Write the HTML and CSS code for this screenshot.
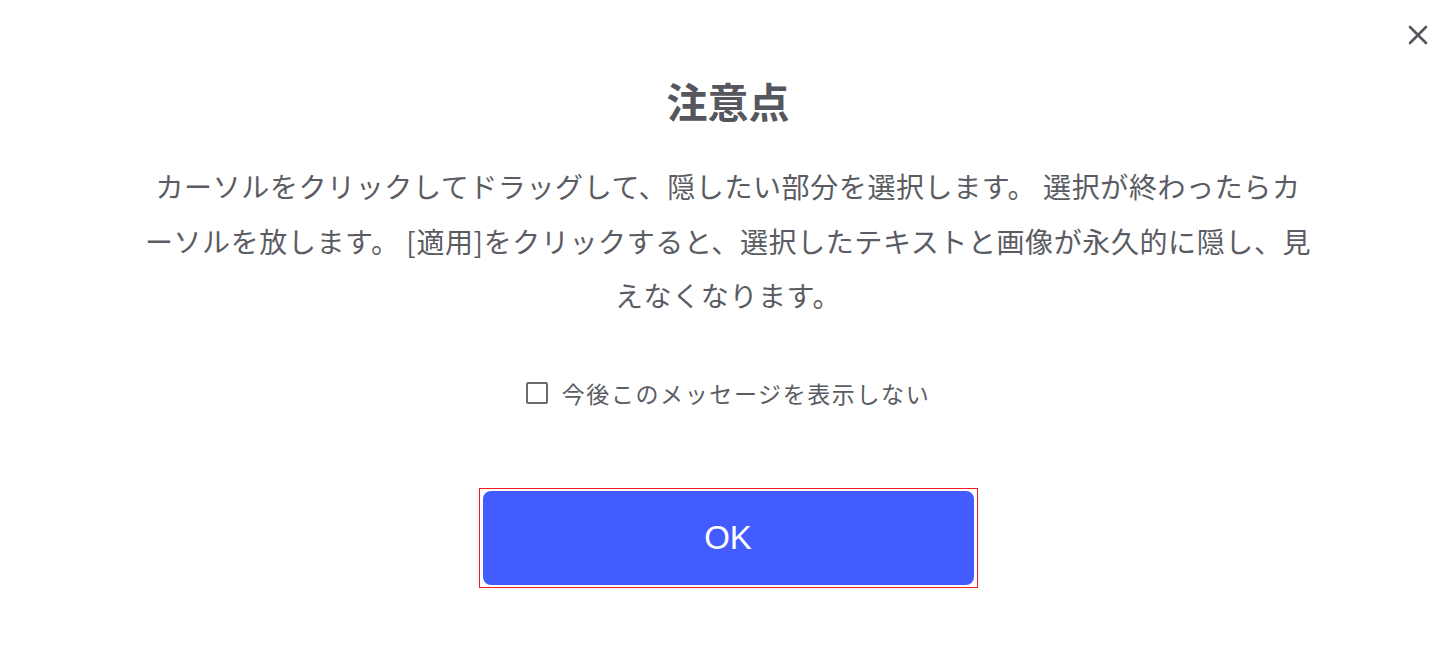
FILE: index.html
```html
<!DOCTYPE html>
<html lang="ja">
<head>
  <meta charset="UTF-8">
  <meta name="viewport" content="width=device-width, initial-scale=1.0">
  <title>注意点</title>
  <link rel="stylesheet" href="styles.css">
</head>
<body>
  <div class="dialog">
    <button class="close" aria-label="閉じる">
      <svg width="20" height="20" viewBox="0 0 20 20">
        <path d="M2 2 L18 18 M18 2 L2 18" stroke="#55565e" stroke-width="2.6" stroke-linecap="round"/>
      </svg>
    </button>

    <h1 class="title">注意点</h1>

    <p class="message">カーソルをクリックしてドラッグして、隠したい部分を選択します。 選択が終わったらカーソルを放します。 [適用]をクリックすると、選択したテキストと画像が永久的に隠し、見えなくなります。</p>

    <label class="check">
      <span class="box"></span>
      今後このメッセージを表示しない
    </label>

    <div class="ok-frame">
      <button class="ok">OK</button>
    </div>
  </div>
</body>
</html>
```

FILE: styles.css
```css
body {
  margin: 0;
  padding: 0;
  background-color: #ffffff;
  font-family: "Noto Sans CJK JP", "Noto Sans", sans-serif;
  color: #5b5c63;
}

.dialog {
  position: relative;
  height: 671px;
  display: flex;
  flex-direction: column;
  align-items: center;
}

.close {
  position: absolute;
  top: 25px;
  right: 28px;
  width: 20px;
  height: 20px;
  padding: 0;
  border: none;
  background: none;
  cursor: pointer;
}

.title {
  margin: 72px 0 0;
  font-size: 41px;
  line-height: 56px;
  font-weight: bold;
  color: #55565e;
}

.message {
  margin: 31px 0 0;
  width: 1172px;
  text-align: center;
  font-size: 28px;
  line-height: 54.5px;
  letter-spacing: 0.6px;
  line-break: anywhere;
}

.check {
  margin-top: 54px;
  display: flex;
  align-items: center;
  gap: 14px;
  font-size: 23px;
  line-height: 32px;
  letter-spacing: 1.6px;
}

.box {
  width: 18px;
  height: 18px;
  border: 2px solid #6b6c72;
  border-radius: 2px;
}

.ok-frame {
  margin-top: 79px;
  padding: 2px 3px;
  border: 1px solid #ee1c25;
}

.ok {
  display: block;
  width: 491px;
  height: 94px;
  border: none;
  border-radius: 8px;
  background-color: #435cff;
  color: #ffffff;
  font-family: "Liberation Sans", Arial, sans-serif;
  font-size: 33px;
  cursor: pointer;
}
```
